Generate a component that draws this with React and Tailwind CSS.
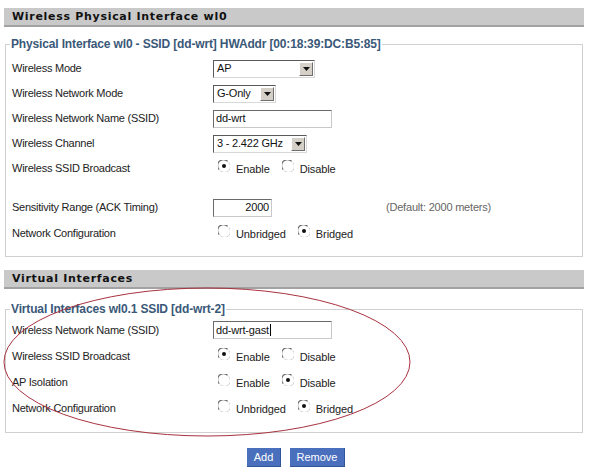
import React from "react";

const font = { fontFamily: 'Tahoma, "Liberation Sans", Arial, sans-serif' };

const Select = ({ value, width }) => (
  <div
    className={`flex items-center h-[18px] bg-white border border-t-[#5a5a5a] border-l-[#5a5a5a] border-r-[#d8d8d8] border-b-[#d8d8d8] ${width}`}
  >
    <span className="flex-1 pl-[3px] text-[11px] tracking-[-0.2px] text-[#111] leading-none">{value}</span>
    <span className="flex items-center justify-center w-[14px] h-[14px] mr-[1px] bg-[#d4d0c8] border border-t-white border-l-white border-r-[#6e6e6e] border-b-[#6e6e6e]">
      <svg width="7" height="4" viewBox="0 0 7 4">
        <path d="M0 0h7L3.5 4z" fill="#111" />
      </svg>
    </span>
  </div>
);

const TextInput = ({ value, width, right, caret }) => (
  <div
    className={`flex items-center h-[18px] bg-white border border-t-[#6a6a6a] border-l-[#6a6a6a] border-r-[#c8c8c8] border-b-[#c8c8c8] px-[2px] text-[11px] tracking-[-0.2px] text-[#111] leading-none ${width} ${right ? "justify-end" : ""}`}
  >
    {value}
    {caret && <span className="ml-[1px] w-[1px] h-[12px] bg-black" />}
  </div>
);

const Radio = ({ checked }) => (
  <svg width="12" height="12" viewBox="0 0 12 12" className="mt-[-5px] shrink-0">
    <circle cx="6" cy="6" r="5.5" fill="white" />
    <path d="M1.3 9.6A5.2 5.2 0 0 1 9.6 1.3" fill="none" stroke="#6a6a6a" strokeWidth="1.2" />
    <path d="M10.7 2.4A5.2 5.2 0 0 1 2.4 10.7" fill="none" stroke="#d0d0d0" strokeWidth="1" />
    {checked && <circle cx="6" cy="6" r="2" fill="#111" />}
  </svg>
);

const Radios = ({ options, selected }) => (
  <div className="flex items-center pl-[5px] text-[11px] tracking-[-0.1px] text-[#222]">
    {options.map((o, i) => (
      <label key={o} className={`flex items-center gap-[6px] ${i > 0 ? "ml-[12px]" : ""}`}>
        <Radio checked={selected === i} />
        <span className="mt-[2px]">{o}</span>
      </label>
    ))}
  </div>
);

const Row = ({ label, h = "h-[25px]", children }) => (
  <div className={`flex items-center ${h}`}>
    <div className="w-[201px] text-[11px] tracking-[-0.25px] text-[#222]">{label}</div>
    <div className="flex items-center">{children}</div>
  </div>
);

const Header = ({ title }) => (
  <div className="h-[19px] bg-[#c9c9c9] border-b-2 border-[#a2a2a2] pl-[8px] flex items-center">
    <span
      className="pt-[2px] text-[11px] font-bold tracking-[0.7px] text-[#111]"
      style={{ fontFamily: 'Verdana, "DejaVu Sans", sans-serif' }}
    >
      {title}
    </span>
  </div>
);

const Legend = ({ children }) => (
  <legend className="ml-[-2px] px-[1px] h-[14px] leading-[14px] text-[12px] font-bold tracking-[-0.15px] text-[#3a5878]">
    {children}
  </legend>
);

export default function App() {
  return (
    <div className="relative w-[591px] h-[473px] bg-white overflow-hidden" style={font}>
      <div className="pl-[4px] w-[584px] pt-[8px] flex flex-col">
        <Header title="Wireless Physical Interface wl0" />

        <fieldset className="mt-[10px] mx-[1px] border border-[#d0d0d0] pl-[6px] pt-[5px] pb-[10px]">
          <Legend>Physical Interface wl0 - SSID [dd-wrt] HWAddr [00:18:39:DC:B5:85]</Legend>
          <Row label="Wireless Mode">
            <Select value="AP" width="w-[102px]" />
          </Row>
          <Row label="Wireless Network Mode">
            <Select value="G-Only" width="w-[63px]" />
          </Row>
          <Row label="Wireless Network Name (SSID)">
            <TextInput value="dd-wrt" width="w-[119px]" />
          </Row>
          <Row label="Wireless Channel">
            <Select value="3 - 2.422 GHz" width="w-[94px]" />
          </Row>
          <Row label="Wireless SSID Broadcast">
            <Radios options={["Enable", "Disable"]} selected={0} />
          </Row>
          <div className="h-[14px]" />
          <Row label="Sensitivity Range (ACK Timing)">
            <TextInput value="2000" width="w-[59px]" right />
            <span className="ml-[114px] text-[11px] tracking-[-0.2px] text-[#666]">(Default: 2000 meters)</span>
          </Row>
          <Row label="Network Configuration" h="h-[26px]">
            <Radios options={["Unbridged", "Bridged"]} selected={1} />
          </Row>
        </fieldset>

        <div className="mt-[13px]">
          <Header title="Virtual Interfaces" />
        </div>

        <fieldset className="mt-[13px] mx-[1px] border border-[#d0d0d0] pl-[6px] pt-[1px] pb-[10px]">
          <Legend>Virtual Interfaces wl0.1 SSID [dd-wrt-2]</Legend>
          <Row label="Wireless Network Name (SSID)" h="h-[26px]">
            <TextInput value="dd-wrt-gast" width="w-[119px]" caret />
          </Row>
          <Row label="Wireless SSID Broadcast" h="h-[26px]">
            <Radios options={["Enable", "Disable"]} selected={0} />
          </Row>
          <Row label="AP Isolation" h="h-[26px]">
            <Radios options={["Enable", "Disable"]} selected={1} />
          </Row>
          <Row label="Network Configuration" h="h-[27px]">
            <Radios options={["Unbridged", "Bridged"]} selected={1} />
          </Row>
        </fieldset>

        <div className="mt-[15px] flex justify-center gap-[9px] pl-[4px]">
          <button className="h-[19px] w-[34px] bg-[#4a6fbd] border-b border-r border-[#34549a] text-white text-[11px]">
            Add
          </button>
          <button className="h-[19px] w-[55px] bg-[#4a6fbd] border-b border-r border-[#34549a] text-white text-[11px]">
            Remove
          </button>
        </div>
      </div>

      <svg className="absolute inset-0 pointer-events-none" width="591" height="473">
        <ellipse cx="207" cy="362" rx="203" ry="74" fill="none" stroke="#a8323f" strokeWidth="1" />
      </svg>
    </div>
  );
}
